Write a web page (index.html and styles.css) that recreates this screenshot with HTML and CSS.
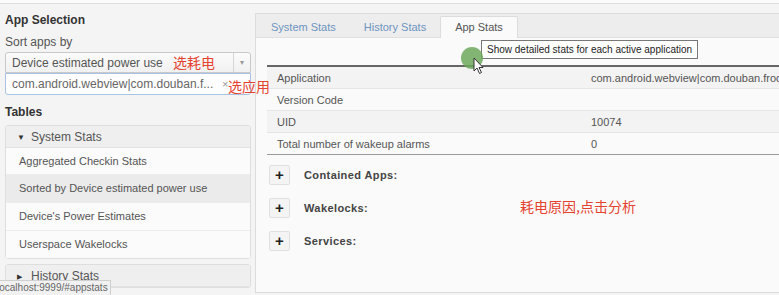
FILE: index.html
```html
<!DOCTYPE html>
<html>
<head>
    <title>Battery Historian</title>
    <meta charset="utf-8">
    <link rel="stylesheet" href="styles.css">
</head>
<body>

<div class="topline"></div>

<div class="page">
    <div class="sidebar">
        <div class="side-title">App Selection</div>
        <div class="side-label">Sort apps by</div>
        <div class="select">
            <span class="select-text">Device estimated power use</span>
            <span class="select-arrow">&#9662;</span>
            <span class="note note-sort">选耗电</span>
        </div>
        <div class="app-input">
            <span class="app-text">com.android.webview|com.douban.f...</span>
            <span class="app-clear">&times;</span>
            <span class="note note-app">选应用</span>
        </div>

        <div class="side-title tables-title">Tables</div>
        <div class="group">
            <div class="group-head"><span class="caret">&#9660;</span>System Stats</div>
            <div class="group-item first">Aggregated Checkin Stats</div>
            <div class="group-item active">Sorted by Device estimated power use</div>
            <div class="group-item">Device's Power Estimates</div>
            <div class="group-item">Userspace Wakelocks</div>
        </div>
        <div class="group">
            <div class="group-head"><span class="caret small">&#9654;</span>History Stats</div>
        </div>
    </div>

    <div class="main">
        <div class="tabs">
            <div class="tab">System Stats</div>
            <div class="tab">History Stats</div>
            <div class="tab active">App Stats</div>
        </div>
        <div class="content">
            <div class="tooltip">Show detailed stats for each active application</div>
            <div class="pointer"></div>
            <svg class="cursor" width="12" height="18" viewBox="0 0 12 18">
                <path d="M1 1 L1 14 L4 11 L6.5 16.5 L8.5 15.5 L6 10.5 L10 10.5 Z" fill="#fff" stroke="#333" stroke-width="1"/>
            </svg>

            <table class="stats">
                <tr><td class="key">Application</td><td>com.android.webview|com.douban.frodo</td></tr>
                <tr><td class="key">Version Code</td><td></td></tr>
                <tr><td class="key">UID</td><td>10074</td></tr>
                <tr><td class="key">Total number of wakeup alarms</td><td>0</td></tr>
            </table>

            <div class="section"><span class="plus">+</span>Contained Apps:</div>
            <div class="section"><span class="plus">+</span>Wakelocks:</div>
            <div class="section"><span class="plus">+</span>Services:</div>

            <div class="note note-main">耗电原因,点击分析</div>
        </div>
    </div>
</div>

<div class="status">localhost:9999/#appstats</div>

</body>
</html>
```

FILE: styles.css
```css
body, html {
    margin: 0; padding: 0;
}
body {
    background: #f4f4f4;
    font-family: "Liberation Sans", Arial, sans-serif;
    font-size: 12px;
    color: #555;
    width: 779px;
    height: 295px;
    overflow: hidden;
    position: relative;
}
.topline {
    height: 3px;
    border-bottom: 1px solid #dedede;
    background: #fafafa;
}
.page {
    display: flex;
}

/* left column */
.sidebar {
    width: 246px;
    padding-left: 5px;
    flex: none;
    position: relative;
    z-index: 2;
}
.side-title {
    font-weight: bold;
    color: #333;
    line-height: 16px;
    margin-top: 8px;
}
.side-label {
    line-height: 14px;
    margin-top: 7px;
}
.select {
    position: relative;
    display: flex;
    align-items: center;
    height: 19px;
    margin-top: 3px;
    border: 1px solid #c9c9c9;
    border-radius: 3px 3px 0 0;
    background: linear-gradient(#fbfbfb, #f1f1f1);
}
.select-text {
    flex: 1;
    padding-left: 6px;
}
.select-arrow {
    width: 16px;
    height: 19px;
    line-height: 19px;
    text-align: center;
    font-size: 8px;
    color: #999;
    border-left: 1px solid #d6d6d6;
}
.app-input {
    position: relative;
    display: flex;
    align-items: center;
    height: 20px;
    border: 1px solid #a9c2e2;
    border-radius: 0 0 3px 3px;
    background: #fff;
}
.app-text {
    flex: 1;
    padding-left: 6px;
    color: #666;
}
.app-clear {
    width: 28px;
    font-size: 11px;
    color: #999;
}
.note {
    position: absolute;
    color: #e5432f;
    font-family: "Noto Sans CJK SC", sans-serif;
    font-size: 14px;
    line-height: 18px;
    white-space: nowrap;
}
.note-sort {
    left: 167px;
    top: 0;
}
.note-app {
    left: 222px;
    top: 3px;
}
.tables-title {
    margin-top: 9px;
}
.group {
    border: 1px solid #dedede;
    border-radius: 3px;
    background: #fff;
    margin-top: 5px;
}
.group + .group {
    margin-top: 5px;
}
.group-head {
    height: 21px;
    line-height: 22px;
    background: #efefef;
    padding-left: 11px;
    border-bottom: 1px solid #e2e2e2;
}
.caret {
    display: inline-block;
    width: 14px;
    font-size: 8px;
    color: #333;
    vertical-align: 1px;
}
.caret.small {
    font-size: 7px;
}
.group-item {
    height: 27px;
    line-height: 27px;
    padding-left: 13px;
    font-size: 11px;
    border-top: 1px solid #ececec;
    background: #fbfbfb;
}
.group-item.first {
    border-top: none;
    height: 26px;
    line-height: 26px;
}
.group-item.active {
    background: #ebebeb;
}

/* right column */
.main {
    flex: 1;
    margin-left: 4px;
    margin-top: 9px;
    height: 278px;
    border: 1px solid #dcdcdc;
    border-right: none;
    background: #fafafa;
    display: flex;
    flex-direction: column;
}
.tabs {
    display: flex;
    align-items: flex-end;
    height: 23px;
    padding-left: 1px;
    background: #ededed;
    border-bottom: 1px solid #e0e0e0;
}
.tab {
    padding: 0 14px;
    height: 20px;
    line-height: 20px;
    font-size: 11px;
    color: #6d94c0;
}
.tab.active {
    background: #fafafa;
    color: #555;
    border: 1px solid #dcdcdc;
    border-bottom: none;
    height: 21px;
    margin-bottom: -1px;
    border-radius: 2px 2px 0 0;
}
.content {
    position: relative;
    flex: 1;
    padding: 27px 0 0 11px;
}
.tooltip {
    position: absolute;
    left: 225px;
    top: 2px;
    padding: 0 5px;
    height: 17px;
    line-height: 17px;
    font-size: 10px;
    color: #222;
    background: #fff;
    border: 1px solid #777;
    white-space: nowrap;
}
.pointer {
    position: absolute;
    left: 205px;
    top: 9px;
    width: 22px;
    height: 22px;
    border-radius: 50%;
    background: rgba(108, 168, 90, 0.85);
}
.cursor {
    position: absolute;
    left: 217px;
    top: 19px;
}
.stats {
    width: 100%;
    table-layout: fixed;
    border-collapse: collapse;
    border-top: 2px solid #666;
    border-bottom: 1px solid #9a9a9a;
    font-size: 11px;
}
.stats td {
    height: 21px;
    padding: 0 0 0 10px;
    border-top: 1px solid #e6e6e6;
    white-space: nowrap;
    color: #555;
}
.stats td.key {
    width: 304px;
}
.stats tr:nth-child(odd) td {
    background: #f3f3f3;
}
.section {
    display: flex;
    align-items: center;
    height: 20px;
    margin-top: 13px;
    margin-left: 2px;
    font-size: 11px;
    font-weight: bold;
    letter-spacing: 0.4px;
    color: #444;
}
.stats + .section {
    margin-top: 10px;
}
.plus {
    width: 19px;
    height: 18px;
    line-height: 18px;
    text-align: center;
    margin-right: 14px;
    font-size: 15px;
    color: #222;
    background: #f4f4f4;
    border: 1px solid #e0e0e0;
    border-radius: 2px;
    letter-spacing: 0;
}
.note-main {
    left: 264px;
    top: 159px;
    font-size: 14px;
}

.status {
    position: absolute;
    left: 0;
    bottom: 0;
    width: 110px;
    height: 14px;
    line-height: 14px;
    text-indent: -3px;
    overflow: hidden;
    white-space: nowrap;
    font-size: 10px;
    color: #666;
    background: #f1f1f1;
    border-top: 1px solid #cfcfcf;
    border-right: 1px solid #cfcfcf;
    z-index: 3;
}
```
